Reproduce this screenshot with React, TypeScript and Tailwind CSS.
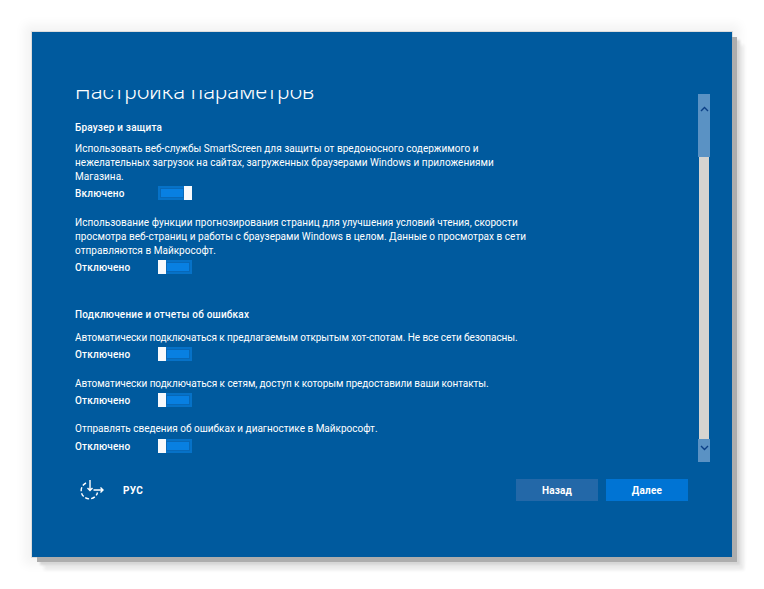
const font = { fontFamily: 'Roboto, "Noto Sans", sans-serif' };

function Toggle({ on }: { on: boolean }) {
  return (
    <div className={`flex h-[14px] w-[34px] -translate-y-px bg-[#0672c8] ${on ? "justify-end" : "justify-start"}`}>
      <div className={`my-[2px] h-[10px] w-[24px] border border-[#0868b8] bg-[#0880e2] ${on ? "-order-1 ml-[2px]" : "order-1 mr-[2px]"}`} />
      <div className="h-[14px] w-[8px] bg-[#f7f9fc]" />
    </div>
  );
}

function Setting({ label, on, className }: { label: string; on: boolean; className: string }) {
  return (
    <div className={`flex items-center ${className}`}>
      <span className="w-[83px] text-[10px] leading-[14px] font-medium tracking-[0.2px] text-white">{label}</span>
      <Toggle on={on} />
    </div>
  );
}

function Text({ children, className = "" }: { children: React.ReactNode; className?: string }) {
  return <p className={`text-[10px] leading-[14px] whitespace-nowrap text-white ${className}`}>{children}</p>;
}

function Heading({ children, className = "" }: { children: React.ReactNode; className?: string }) {
  return <h3 className={`text-[10px] leading-[14px] font-medium tracking-[0.2px] text-white ${className}`}>{children}</h3>;
}

function Scrollbar() {
  return (
    <div className="mt-[4px] flex h-[368px] w-[12px] flex-col">
      <div className="flex h-[63px] justify-center bg-[#5a92c4] pt-[12px]">
        <svg width="9" height="6" viewBox="0 0 9 6" fill="none" stroke="#0b3f86" strokeWidth="1.4">
          <path d="M1 5 L4.5 1.5 L8 5" />
        </svg>
      </div>
      <div className="mx-px flex-1 bg-[#d6d4d0]" />
      <div className="flex h-[23px] justify-center bg-[#5a92c4] pt-[6px]">
        <svg width="9" height="6" viewBox="0 0 9 6" fill="none" stroke="#0b3f86" strokeWidth="1.4">
          <path d="M1 1 L4.5 4.5 L8 1" />
        </svg>
      </div>
    </div>
  );
}

function EaseIcon() {
  return (
    <svg width="24" height="20" viewBox="0 0 24 20" fill="none" stroke="white" strokeWidth="1.4">
      <path d="M6 3 A8.3 8.3 0 1 0 17.5 12.5" strokeDasharray="4 2" />
      <path d="M10 0 V10.5 M7.5 8 L10 10.5 L12.5 8" />
      <path d="M13.5 10 H23 M20.5 7.5 L23 10 L20.5 12.5" />
    </svg>
  );
}

export default function App() {
  return (
    <div className="h-[589px] w-[764px] overflow-hidden bg-white pt-[32px] pl-[32px]" style={font}>
      <div className="flex h-[525px] w-[700px] flex-col bg-[#005a9e] shadow-[5px_5px_0_0_#adadad,8px_8px_2px_0_#d6d6d6,12px_13px_3px_0_#ebebeb,0_0_0_1px_#dddddd,0_0_10px_8px_#f4f4f4]">
        <div className="mt-[58px] flex h-[372px] items-start justify-between pr-[22px] pl-[43px]">
          <div className="h-[372px] overflow-hidden">
            <h1 className="-mt-[11px] mb-[16px] text-[22px] leading-[26px] font-light tracking-[0.1px] text-white">
              Настройка параметров
            </h1>
            <div className="tracking-[0.03px]">
              <Heading>Браузер и защита</Heading>
              <Text className="mt-[7px]">Использовать веб-службы SmartScreen для защиты от вредоносного содержимого и</Text>
              <Text>нежелательных загрузок на сайтах, загруженных браузерами Windows и приложениями</Text>
              <Text>Магазина.</Text>
              <Setting label="Включено" on className="mt-[3px]" />
              <Text className="mt-[15px]">Использование функции прогнозирования страниц для улучшения условий чтения, скорости</Text>
              <Text>просмотра веб-страниц и работы с браузерами Windows в целом. Данные о просмотрах в сети</Text>
              <Text>отправляются в Майкрософт.</Text>
              <Setting label="Отключено" on={false} className="mt-[3px]" />
            </div>
            <Heading className="mt-[33px]">Подключение и отчеты об ошибках</Heading>
            <Text className="mt-[9px] tracking-[-0.07px]">Автоматически подключаться к предлагаемым открытым хот-спотам. Не все сети безопасны.</Text>
            <Setting label="Отключено" on={false} className="mt-[3px]" />
            <Text className="mt-[15px] tracking-[-0.06px]">Автоматически подключаться к сетям, доступ к которым предоставили ваши контакты.</Text>
            <Setting label="Отключено" on={false} className="mt-[3px]" />
            <Text className="mt-[14px]">Отправлять сведения об ошибках и диагностике в Майкрософт.</Text>
            <Setting label="Отключено" on={false} className="mt-[4px]" />
          </div>
          <Scrollbar />
        </div>
        <div className="mt-[17px] flex items-center pr-[44px] pl-[48px]">
          <EaseIcon />
          <span className="mt-px ml-[19px] text-[10px] font-bold tracking-[0.3px] text-white">РУС</span>
          <div className="ml-auto flex gap-[8px]">
            <button className="h-[22px] w-[82px] bg-[#2368a8] pt-px text-[10px] font-bold tracking-[0.2px] text-white">Назад</button>
            <button className="h-[22px] w-[82px] bg-[#0074d4] pt-px text-[10px] font-bold tracking-[0.2px] text-white">Далее</button>
          </div>
        </div>
      </div>
    </div>
  );
}
